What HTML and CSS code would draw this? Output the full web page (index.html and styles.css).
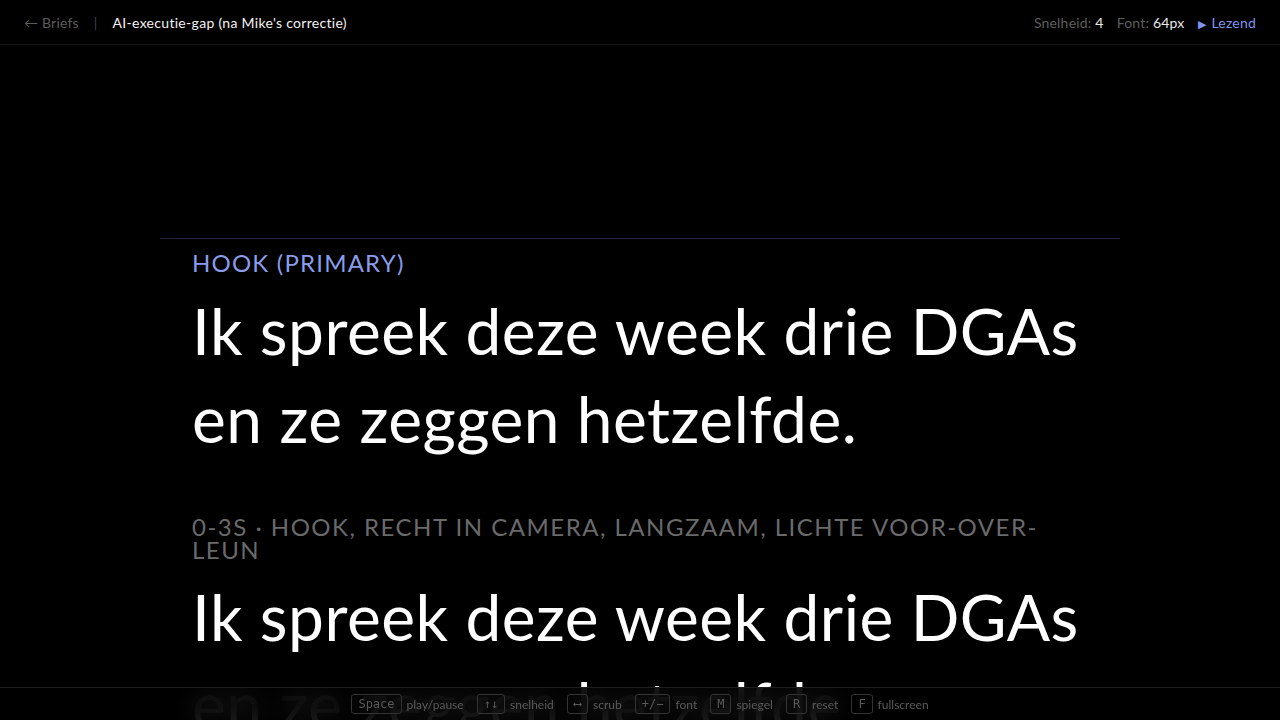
FILE: index.html
```html
<!DOCTYPE html>
<html lang="nl">
<head>
<meta charset="utf-8">
<title>Teleprompter</title>
<link rel="stylesheet" href="styles.css">
</head>
<body>
<div class="app">
  <header class="topbar">
    <div class="topbar-left">
      <span class="back">← Briefs</span>
      <span class="sep">|</span>
      <span class="title">AI-executie-gap (na Mike's correctie)</span>
    </div>
    <div class="topbar-right">
      <span class="stat">Snelheid: <b>4</b></span>
      <span class="stat">Font: <b>64px</b></span>
      <span class="status"><span class="play">▶</span> Lezend</span>
    </div>
  </header>
  <main class="stage">
    <div class="reader">
      <section class="block">
        <div class="label">Hook (primary)</div>
        <p class="line">Ik spreek deze week drie DGAs en ze zeggen hetzelfde.</p>
        <div class="cue">0-3s · hook, recht in camera, langzaam, lichte voor-over-leun</div>
        <p class="line">Ik spreek deze week drie DGAs en ze zeggen hetzelfde.</p>
      </section>
    </div>
  </main>
  <footer class="keys">
    <span class="key"><kbd>Space</kbd>play/pause</span>
    <span class="key"><kbd>↑↓</kbd>snelheid</span>
    <span class="key"><kbd>⟷</kbd>scrub</span>
    <span class="key"><kbd>+/−</kbd>font</span>
    <span class="key"><kbd>M</kbd>spiegel</span>
    <span class="key"><kbd>R</kbd>reset</span>
    <span class="key"><kbd>F</kbd>fullscreen</span>
  </footer>
</div>
</body>
</html>
```
FILE: styles.css
```css
html, body {
  margin: 0;
  padding: 0;
  background: #000;
  height: 100%;
  overflow: hidden;
}
body {
  font-family: Lato, "Noto Sans", sans-serif;
  color: #fff;
}
.app {
  position: relative;
  height: 720px;
  display: flex;
  flex-direction: column;
}
.topbar {
  height: 45px;
  flex: 0 0 45px;
  box-sizing: border-box;
  border-bottom: 1px solid #1a1a1a;
  display: flex;
  align-items: center;
  justify-content: space-between;
  padding: 0 24px;
  font-size: 14px;
  letter-spacing: 0.2px;
}
.topbar-left, .topbar-right {
  display: flex;
  align-items: center;
}
.back { color: #5c5c5c; }
.sep { color: #444; margin: 0 15px 0 15px; }
.title { color: #f2f2f2; letter-spacing: 0.3px; }
.stat { color: #5e5e5e; margin-right: 13px; }
.stat b { color: #e8e8e8; font-weight: 400; }
.status { color: #7f95ef; }
.play { font-size: 11px; margin-right: 2px; }
.stage {
  flex: 1;
  overflow: hidden;
}
.reader {
  width: 960px;
  margin: 0 auto;
  padding-top: 193px;
}
.block {
  border-top: 1px solid #1f2638;
  padding: 0 32px;
}
.label {
  margin-top: 8px;
  font-size: 24px;
  line-height: 32px;
  letter-spacing: 1.2px;
  text-transform: uppercase;
  color: #8a9ce8;
}
.line {
  margin: 8px 0 0;
  font-size: 64px;
  line-height: 88px;
  letter-spacing: 0.5px;
  color: #fff;
}
.cue {
  margin: 52px 0 12px;
  font-size: 24px;
  line-height: 23px;
  letter-spacing: 1.5px;
  text-transform: uppercase;
  color: #6a6a6a;
}
.cue + .line { margin-top: 0; }
.keys {
  position: absolute;
  left: 0;
  right: 0;
  bottom: 0;
  height: 33px;
  box-sizing: border-box;
  border-top: 1px solid #1e1e1e;
  background: rgba(0, 0, 0, 0.86);
  backdrop-filter: blur(12px);
  display: flex;
  align-items: center;
  justify-content: center;
  gap: 13px;
  font-size: 12px;
  color: #5a5a5a;
}
.key {
  display: flex;
  align-items: center;
  gap: 5px;
}
kbd {
  font-family: "DejaVu Sans Mono", monospace;
  font-size: 12px;
  line-height: 18px;
  color: #5a5a5a;
  border: 1px solid #333;
  border-radius: 3px;
  padding: 0 6px;
}
```
